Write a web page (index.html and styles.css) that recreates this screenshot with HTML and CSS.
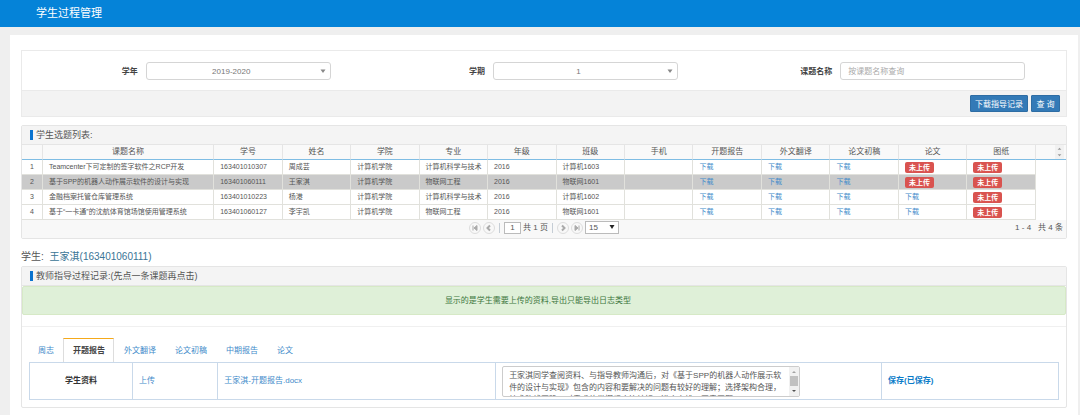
FILE: index.html
```html
<!DOCTYPE html>
<html lang="zh-CN">

<head>
    <meta charset="utf-8">
    <title>学生过程管理</title>
    <link rel="stylesheet" href="styles.css">
</head>

<body>
    <header class="topbar">
        <h1>学生过程管理</h1>
    </header>

    <main class="content">
        <!-- Search -->
        <form class="search">
            <div class="search-fields">
                <div class="field">
                    <label for="year">学年</label>
                    <div class="control">
                        <select id="year">
                            <option>2019-2020</option>
                        </select>
                        <svg class="caret" viewBox="0 0 6 4"><path d="M0.5 0.5h5L3 4z" /></svg>
                    </div>
                </div>
                <div class="field">
                    <label for="term">学期</label>
                    <div class="control">
                        <select id="term">
                            <option>1</option>
                        </select>
                        <svg class="caret" viewBox="0 0 6 4"><path d="M0.5 0.5h5L3 4z" /></svg>
                    </div>
                </div>
                <div class="field">
                    <label for="topic">课题名称</label>
                    <div class="control">
                        <input type="text" id="topic" placeholder="按课题名称查询">
                    </div>
                </div>
            </div>
            <div class="search-actions">
                <button type="button" class="btn">下载指导记录</button>
                <button type="button" class="btn">查 询</button>
            </div>
        </form>

        <!-- Topic list -->
        <section class="panel">
            <h2 class="panel-title">学生选题列表:</h2>
            <table class="list">
                <colgroup>
                    <col class="col-num">
                    <col class="col-topic">
                    <col span="12">
                    <col class="col-tail">
                </colgroup>
                <thead>
                    <tr>
                        <th></th>
                        <th>课题名称</th>
                        <th>学号</th>
                        <th>姓名</th>
                        <th>学院</th>
                        <th>专业</th>
                        <th>年级</th>
                        <th>班级</th>
                        <th>手机</th>
                        <th>开题报告</th>
                        <th>外文翻译</th>
                        <th>论文初稿</th>
                        <th>论文</th>
                        <th>图纸</th>
                        <th class="tail">
                            <svg class="spin" viewBox="0 0 9 15"><path d="M2.5 5h4L4.5 3zM2.5 10h4L4.5 12z" /></svg>
                        </th>
                    </tr>
                </thead>
                <tbody>
                    <tr>
                        <td class="num">1</td>
                        <td>Teamcenter下可定制的签字软件之RCP开发</td>
                        <td>163401010307</td>
                        <td>周成芸</td>
                        <td>计算机学院</td>
                        <td>计算机科学与技术</td>
                        <td>2016</td>
                        <td>计算机1603</td>
                        <td></td>
                        <td><a href="#">下载</a></td>
                        <td><a href="#">下载</a></td>
                        <td><a href="#">下载</a></td>
                        <td><span class="badge">未上传</span></td>
                        <td><span class="badge">未上传</span></td>
                        <td class="tail"></td>
                    </tr>
                    <tr class="selected">
                        <td class="num">2</td>
                        <td>基于SPP的机器人动作展示软件的设计与实现</td>
                        <td>163401060111</td>
                        <td>王家淇</td>
                        <td>计算机学院</td>
                        <td>物联网工程</td>
                        <td>2016</td>
                        <td>物联网1601</td>
                        <td></td>
                        <td><a href="#">下载</a></td>
                        <td><a href="#">下载</a></td>
                        <td><a href="#">下载</a></td>
                        <td><span class="badge">未上传</span></td>
                        <td><span class="badge">未上传</span></td>
                        <td class="tail"></td>
                    </tr>
                    <tr>
                        <td class="num">3</td>
                        <td>金融档案托管仓库管理系统</td>
                        <td>163401010223</td>
                        <td>杨港</td>
                        <td>计算机学院</td>
                        <td>计算机科学与技术</td>
                        <td>2016</td>
                        <td>计算机1602</td>
                        <td></td>
                        <td><a href="#">下载</a></td>
                        <td><a href="#">下载</a></td>
                        <td><a href="#">下载</a></td>
                        <td><a href="#">下载</a></td>
                        <td><span class="badge">未上传</span></td>
                        <td class="tail"></td>
                    </tr>
                    <tr>
                        <td class="num">4</td>
                        <td>基于“一卡通”的沈航体育馆场馆使用管理系统</td>
                        <td>163401060127</td>
                        <td>李宇凯</td>
                        <td>计算机学院</td>
                        <td>物联网工程</td>
                        <td>2016</td>
                        <td>物联网1601</td>
                        <td></td>
                        <td><a href="#">下载</a></td>
                        <td><a href="#">下载</a></td>
                        <td><a href="#">下载</a></td>
                        <td><a href="#">下载</a></td>
                        <td><span class="badge">未上传</span></td>
                        <td class="tail"></td>
                    </tr>
                </tbody>
            </table>
            <div class="pager">
                <div class="pager-nav">
                    <button type="button" class="page-btn" aria-label="首页">
                        <svg viewBox="0 0 10 10"><path d="M3 2.5v5M7 2.5v5L4 5z" /></svg>
                    </button>
                    <button type="button" class="page-btn" aria-label="上一页">
                        <svg viewBox="0 0 10 10"><path class="chevron" d="M6 2.5L3.5 5L6 7.5" /></svg>
                    </button>
                    <span class="sep"></span>
                    <label class="page-label"><input type="text" class="page-input" value="1" aria-label="页码">共 1 页</label>
                    <span class="sep"></span>
                    <button type="button" class="page-btn" aria-label="下一页">
                        <svg viewBox="0 0 10 10"><path class="chevron" d="M4 2.5L6.5 5L4 7.5" /></svg>
                    </button>
                    <button type="button" class="page-btn" aria-label="末页">
                        <svg viewBox="0 0 10 10"><path d="M7 2.5v5M3 2.5v5L6 5z" /></svg>
                    </button>
                    <div class="control page-size">
                        <select aria-label="每页条数">
                            <option>15</option>
                        </select>
                        <svg class="caret" viewBox="0 0 6 4"><path d="M0.5 0h5L3 4z" /></svg>
                    </div>
                </div>
                <div class="pager-info"><span>1 - 4</span><span>共 4 条</span></div>
            </div>
        </section>

        <p class="student">学生: <a href="#">王家淇(163401060111)</a></p>

        <!-- Guidance records -->
        <section class="panel">
            <h2 class="panel-title">教师指导过程记录:(先点一条课题再点击)</h2>
            <div class="notice">显示的是学生需要上传的资料,导出只能导出日志类型</div>
            <div class="records">
                <nav class="tabs">
                    <a href="#" class="tab">周志</a>
                    <a href="#" class="tab active">开题报告</a>
                    <a href="#" class="tab">外文翻译</a>
                    <a href="#" class="tab">论文初稿</a>
                    <a href="#" class="tab">中期报告</a>
                    <a href="#" class="tab">论文</a>
                </nav>
                <table class="files">
                    <colgroup>
                        <col class="col-kind">
                        <col class="col-upload">
                        <col class="col-file">
                        <col class="col-comment">
                        <col>
                    </colgroup>
                    <tr>
                        <th>学生资料</th>
                        <td><a href="#">上传</a></td>
                        <td><a href="#">王家淇-开题报告.docx</a></td>
                        <td>
                            <div class="comment">
                                <textarea aria-label="评语">王家淇同学查阅资料、与指导教师沟通后，对《基于SPP的机器人动作展示软件的设计与实现》包含的内容和要解决的问题有较好的理解；选择架构合理，技术路线正确，对需求的掌握程度比较好，进度安排，同意开题。</textarea>
                                <svg class="scroll" viewBox="0 0 10 29">
                                    <rect width="10" height="29" fill="#f1f1f1" />
                                    <rect x="1" y="9" width="8" height="10" fill="#c1c1c1" />
                                    <path d="M3 6h4L5 4z" fill="#a3a3a3" />
                                    <path d="M3 23h4L5 25z" fill="#505050" />
                                </svg>
                            </div>
                        </td>
                        <td><a href="#" class="save">保存(已保存)</a></td>
                    </tr>
                </table>
            </div>
        </section>
    </main>
</body>

</html>
```
FILE: styles.css
```css
* {
    box-sizing: border-box;
}

body {
    background: #efefef;
    color: #555;
    font-family: "Liberation Sans", "Noto Sans CJK SC", sans-serif;
    font-size: 8px;
    line-height: 12px;
    margin: 0;
}

a {
    color: #428bca;
    text-decoration: none;
}

input,
select,
textarea,
button {
    font-family: inherit;
    font-size: 8px;
    margin: 0;
}

.topbar {
    background: #0583d8;
    padding: 5px 36px 6px;
}

.topbar h1 {
    color: white;
    font-size: 11px;
    font-weight: normal;
    line-height: 16px;
    margin: 0;
}

.content {
    background: white;
    margin: 8px 2px 0 10px;
    min-height: calc(100vh - 35px);
    padding: 15px 11px 7px;
}

/* Search */
.search {
    border: 1px solid #eaeaea;
    margin-bottom: 8px;
}

.search-fields {
    display: grid;
    grid-template-columns: repeat(3, 1fr);
    padding: 11px 2px 10px 0;
}

.field {
    align-items: center;
    display: flex;
    gap: 8px;
}

.field label {
    color: #444;
    flex: 0 0 33.3%;
    font-weight: bold;
    padding-top: 2px;
    text-align: right;
}

.control {
    position: relative;
}

.field .control {
    flex: 0 0 53.3%;
}

.field select,
.field input {
    appearance: none;
    background: white;
    border: 1px solid #d5d5d5;
    border-radius: 3px;
    color: #777;
    display: block;
    height: 18px;
    padding: 0 7px;
    width: 100%;
}

.field select {
    padding-right: 21px;
    text-align: center;
    text-align-last: center;
}

.field input::placeholder {
    color: #aaa;
}

.caret {
    fill: #888;
    height: 4px;
    pointer-events: none;
    position: absolute;
    right: 5px;
    top: 7px;
    width: 6px;
}

.search-actions {
    background: #f3f3f3;
    border-top: 1px solid #eaeaea;
    display: flex;
    gap: 3px;
    justify-content: flex-end;
    padding: 4px 6px;
}

.btn {
    background: #337ab7;
    border: 1px solid #2e6da4;
    border-radius: 1px;
    color: white;
    cursor: pointer;
    height: 17px;
    min-width: 29px;
    padding: 0 4px;
}

/* Panels */
.panel {
    border: 1px solid #e5e5e5;
    border-radius: 2px;
}

.panel-title {
    align-items: center;
    background: #f4f4f4;
    border-bottom: 1px solid #e5e5e5;
    display: flex;
    font-size: 9px;
    font-weight: normal;
    gap: 3px;
    line-height: 12px;
    margin: 0;
    padding: 3px 8px;
}

.panel-title::before {
    background: #0a73cf;
    content: "";
    height: 10px;
    width: 3px;
}

/* Topic list */
.list {
    border-collapse: separate;
    border-spacing: 0;
    font-size: 7px;
    line-height: 12px;
    table-layout: fixed;
    width: 100%;
}

.col-num {
    width: 21px;
}

.col-topic {
    width: 16.4%;
}

.col-tail {
    width: 30px;
}

.list th {
    background: #f9f9f9;
    border-bottom: 1px solid #7fbde4;
    border-right: 1px solid #e5e5e5;
    font-size: 8px;
    font-weight: normal;
    height: 15px;
    padding: 0;
}

.list td {
    border-bottom: 1px solid #e1e1dc;
    border-right: 1px solid #e1e1dc;
    height: 15px;
    overflow: hidden;
    padding: 0 0 0 6px;
    white-space: nowrap;
}

.list .num {
    padding: 0;
    text-align: center;
}

.list .selected td {
    background: #cacaca;
}

.list .tail,
.list .selected .tail {
    border-right: none;
}

.list td.tail,
.list .selected .tail {
    background: white;
    border-bottom: none;
}

.spin {
    background: #f1f1f1;
    display: block;
    fill: #999;
    height: 14px;
    margin: 0 2px 0 auto;
    width: 9px;
}

.badge {
    background: #d9534f;
    border-radius: 2px;
    color: white;
    display: block;
    font-weight: bold;
    line-height: 11px;
    text-align: center;
    width: 29px;
}

/* Pager */
.pager {
    align-items: center;
    background: #f8f8f8;
    display: grid;
    grid-template-columns: 1fr auto 1fr;
    padding: 1px 0 4px;
}

.pager-nav {
    align-items: center;
    display: flex;
    gap: 2px;
    grid-column: 2;
}

.page-btn {
    background: #f8f8f8;
    border: 1px solid #ddd;
    border-radius: 50%;
    height: 12px;
    padding: 0;
    width: 12px;
}

.page-btn svg {
    display: block;
    fill: #aaa;
    height: 10px;
    stroke: #aaa;
    width: 10px;
}

.page-btn .chevron {
    fill: none;
    stroke-width: 2;
}

.sep {
    background: #c5cdd5;
    height: 10px;
    margin: 0 2px;
    width: 1px;
}

.page-label {
    align-items: center;
    display: flex;
    gap: 2px;
}

.page-input {
    border: 1px solid #bbb;
    color: #555;
    height: 12px;
    padding: 0;
    text-align: center;
    width: 17px;
}

.page-size select {
    appearance: none;
    background: white;
    border: 1px solid #bbb;
    border-radius: 0;
    color: #555;
    display: block;
    height: 13px;
    padding: 0 3px;
    width: 34px;
}

.page-size .caret {
    fill: #222;
    right: 4px;
    top: 4px;
}

.pager-info {
    display: flex;
    gap: 7px;
    justify-content: flex-end;
    padding-right: 3px;
}

/* Student */
.student {
    font-size: 10px;
    line-height: 16px;
    margin: 10px 0 1px;
}

.student a {
    color: #3a7596;
    padding-left: 3px;
}

/* Guidance records */
.notice {
    background: #dff0d8;
    border: 1px solid #d6e9c6;
    border-radius: 2px;
    color: #3c763d;
    padding: 8px 20px 7px 8px;
    text-align: center;
}

.records {
    border-top: 1px solid #f0f0f0;
    margin-top: 11px;
    padding: 11px 7px 7px;
}

.tabs {
    display: flex;
}

.tab {
    border: 1px solid transparent;
    border-bottom: none;
    padding: 6px 8px 5px 9px;
}

.tab:first-child {
    padding-left: 8px;
}

.tab.active {
    border-color: #ddd;
    border-top-color: #f5a91a;
    color: #444;
    font-weight: bold;
}

.files {
    border-collapse: collapse;
    border: 1px solid #c5d5e5;
    table-layout: fixed;
    width: 100%;
}

.files th,
.files td {
    border: 1px solid #c9d9ea;
    height: 37px;
    padding: 0 6px;
    text-align: left;
}

.files th {
    color: #333;
    text-align: center;
}

.col-kind {
    width: 10%;
}

.col-upload {
    width: 8.3%;
}

.col-file {
    width: 27%;
}

.col-comment {
    width: 37.5%;
}

.comment {
    position: relative;
    width: 80%;
}

.comment textarea {
    border: 1px solid #ccc;
    border-radius: 2px;
    color: #555;
    display: block;
    height: 31px;
    line-height: 12px;
    overflow: hidden;
    padding: 3px 18px 0 6px;
    resize: none;
    width: 100%;
}

.scroll {
    height: 29px;
    position: absolute;
    right: 1px;
    top: 1px;
    width: 10px;
}

.save {
    color: #0a7bc8;
    font-weight: bold;
}
```
